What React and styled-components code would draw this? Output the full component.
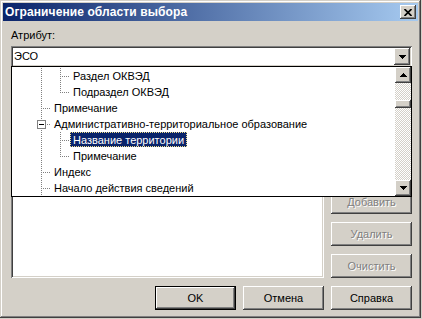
import React from "react";
import styled, { createGlobalStyle, css } from "styled-components";

const GlobalStyle = createGlobalStyle`
  html, body { margin: 0; padding: 0; background: #d4d0c8; }
  body { font-family: "Liberation Sans", Arial, sans-serif; font-size: 11px; color: #000; }
  * { box-sizing: border-box; }
`;

const raised = css`
  background: #d4d0c8;
  box-shadow: inset -1px -1px #404040, inset 1px 1px #fff, inset -2px -2px #808080, inset 2px 2px #d4d0c8;
`;

const sunken = css`
  box-shadow: inset 1px 1px #808080, inset -1px -1px #fff, inset 2px 2px #404040, inset -2px -2px #d4d0c8;
`;

const Window = styled.div`
  width: 421px;
  height: 318px;
  background: #d4d0c8;
  padding: 3px;
  display: flex;
  flex-direction: column;
  box-shadow: inset -1px -1px #404040, inset 1px 1px #d4d0c8, inset -2px -2px #808080, inset 2px 2px #fff;
`;

const TitleBar = styled.div`
  height: 18px;
  flex: none;
  display: flex;
  align-items: center;
  padding-left: 2px;
  background: linear-gradient(to right, #0a246a, #a6caf0);
  color: #fff;
  font-weight: bold;
  font-size: 12px;
  letter-spacing: 0.1px;
`;

const CloseButton = styled.div`
  ${raised};
  width: 16px;
  height: 14px;
  margin-left: auto;
  margin-right: 2px;
  display: flex;
  align-items: center;
  justify-content: center;
`;

const Body = styled.div`
  flex: 1;
  display: flex;
  flex-direction: column;
  padding: 8px 6px 0 8px;
`;

const Label = styled.div`
  height: 13px;
  line-height: 13px;
`;

const Combo = styled.div`
  position: relative;
  margin-top: 4px;
  height: 21px;
  background: #fff;
  ${sunken};
  display: flex;
  align-items: stretch;
  padding: 2px;
`;

const ComboText = styled.div`
  flex: 1;
  line-height: 17px;
  padding-left: 1px;
`;

const ArrowButton = styled.div`
  ${raised};
  width: 16px;
  height: ${(p) => p.$h || 16}px;
  flex: none;
  display: flex;
  align-items: center;
  justify-content: center;
`;

const DropList = styled.div`
  position: absolute;
  top: 20px;
  left: 0;
  width: 401px;
  height: 131px;
  background: #fff;
  border: 1px solid #000;
  display: flex;
  z-index: 5;
`;

const Tree = styled.div`
  flex: 1;
  display: flex;
  flex-direction: column;
  padding: 1px 0 0 20px;
  overflow: hidden;
`;

const Row = styled.div`
  display: flex;
  height: 16px;
  flex: none;
`;

const dots = (dir) =>
  `repeating-linear-gradient(${dir}, #808080 0 1px, transparent 1px 2px)`;

const Guide = styled.div`
  position: relative;
  width: 19px;
  flex: none;
  &::before {
    content: "";
    display: ${(p) => (p.$vert === "none" ? "none" : "block")};
    position: absolute;
    left: 9px;
    top: 0;
    width: 1px;
    height: ${(p) => (p.$vert === "half" ? "9px" : "16px")};
    background: ${dots("to bottom")};
  }
  &::after {
    content: "";
    display: ${(p) => (p.$stub ? "block" : "none")};
    position: absolute;
    left: 11px;
    top: 8px;
    width: 8px;
    height: 1px;
    background: ${dots("to right")};
  }
`;

const Expander = styled.div`
  position: absolute;
  left: 5px;
  top: 4px;
  width: 9px;
  height: 9px;
  border: 1px solid #808080;
  background: #fff;
  z-index: 1;
  &::before {
    content: "";
    position: absolute;
    left: 1px;
    top: 3px;
    width: 5px;
    height: 1px;
    background: #000;
  }
`;

const ItemLabel = styled.div`
  height: 15px;
  line-height: 14px;
  padding: 0 2px;
  white-space: nowrap;
  border: 1px solid transparent;
  ${(p) =>
    p.$selected &&
    css`
      background: #0a246a;
      color: #fff;
      border: 1px dotted #f3e08a;
    `}
`;

const ScrollBar = styled.div`
  width: 16px;
  flex: none;
  display: flex;
  flex-direction: column;
  margin-right: 0;
`;

const Track = styled.div`
  flex: 1;
  background-color: #fff;
  background-image: conic-gradient(#d4d0c8 25%, #fff 0 50%, #d4d0c8 0 75%, #fff 0);
  background-size: 2px 2px;
  display: flex;
  flex-direction: column;
`;

const Thumb = styled.div`
  ${raised};
  height: 8px;
  margin-top: 17px;
`;

const MainRow = styled.div`
  margin-top: 7px;
  height: 204px;
  display: flex;
  gap: 7px;
`;

const ListBox = styled.div`
  width: 313px;
  background: #fff;
  ${sunken};
`;

const ButtonColumn = styled.div`
  width: 81px;
  display: flex;
  flex-direction: column;
  justify-content: flex-end;
  gap: 8px;
`;

const Button = styled.div`
  ${raised};
  width: 81px;
  height: 24px;
  flex: none;
  display: flex;
  align-items: center;
  justify-content: center;
  line-height: 13px;
  ${(p) =>
    p.$disabled &&
    css`
      color: #808080;
      text-shadow: 1px 1px #fff;
    `}
  ${(p) =>
    p.$default &&
    css`
      box-shadow: inset 0 0 0 1px #000, inset -2px -2px #404040, inset 2px 2px #fff, inset -3px -3px #808080;
    `}
`;

const BottomRow = styled.div`
  margin-top: 8px;
  display: flex;
  justify-content: flex-end;
  gap: 7px;
`;

const DownArrow = () => (
  <svg width="7" height="4" viewBox="0 0 7 4">
    <polygon points="0,0 7,0 3.5,4" fill="#000" shapeRendering="crispEdges" />
  </svg>
);

const UpArrow = () => (
  <svg width="7" height="4" viewBox="0 0 7 4">
    <polygon points="0,4 7,4 3.5,0" fill="#000" shapeRendering="crispEdges" />
  </svg>
);

const CloseGlyph = () => (
  <svg width="8" height="7" viewBox="0 0 8 7">
    <path d="M0.5 0 L7.5 7 M7.5 0 L0.5 7" stroke="#000" strokeWidth="1.7" fill="none" />
  </svg>
);

const items = [
  { guides: [{ vert: "full" }, { vert: "full", stub: true }], text: "Раздел ОКВЭД" },
  { guides: [{ vert: "full" }, { vert: "half", stub: true }], text: "Подраздел ОКВЭД" },
  { guides: [{ vert: "full", stub: true }], text: "Примечание" },
  { guides: [{ vert: "full", stub: true, expander: true }], text: "Административно-территориальное образование" },
  { guides: [{ vert: "full" }, { vert: "full", stub: true }], text: "Название территории", selected: true },
  { guides: [{ vert: "full" }, { vert: "half", stub: true }], text: "Примечание" },
  { guides: [{ vert: "full", stub: true }], text: "Индекс" },
  { guides: [{ vert: "full", stub: true }], text: "Начало действия сведений" },
];

export default function App() {
  return (
    <>
      <GlobalStyle />
      <Window>
        <TitleBar>
          Ограничение области выбора
          <CloseButton>
            <CloseGlyph />
          </CloseButton>
        </TitleBar>
        <Body>
          <Label>Атрибут:</Label>
          <Combo>
            <ComboText>ЭСО</ComboText>
            <ArrowButton $h={17}>
              <DownArrow />
            </ArrowButton>
            <DropList>
              <Tree>
                {items.map((it, i) => (
                  <Row key={i}>
                    {it.guides.map((g, j) => (
                      <Guide key={j} $vert={g.vert} $stub={g.stub}>
                        {g.expander && <Expander />}
                      </Guide>
                    ))}
                    <ItemLabel $selected={it.selected}>{it.text}</ItemLabel>
                  </Row>
                ))}
              </Tree>
              <ScrollBar>
                <ArrowButton>
                  <UpArrow />
                </ArrowButton>
                <Track>
                  <Thumb />
                </Track>
                <ArrowButton>
                  <DownArrow />
                </ArrowButton>
              </ScrollBar>
            </DropList>
          </Combo>
          <MainRow>
            <ListBox />
            <ButtonColumn>
              <Button $disabled>Добавить</Button>
              <Button $disabled>Удалить</Button>
              <Button $disabled>Очистить</Button>
            </ButtonColumn>
          </MainRow>
          <BottomRow>
            <Button $default>OK</Button>
            <Button>Отмена</Button>
            <Button>Справка</Button>
          </BottomRow>
        </Body>
      </Window>
    </>
  );
}
